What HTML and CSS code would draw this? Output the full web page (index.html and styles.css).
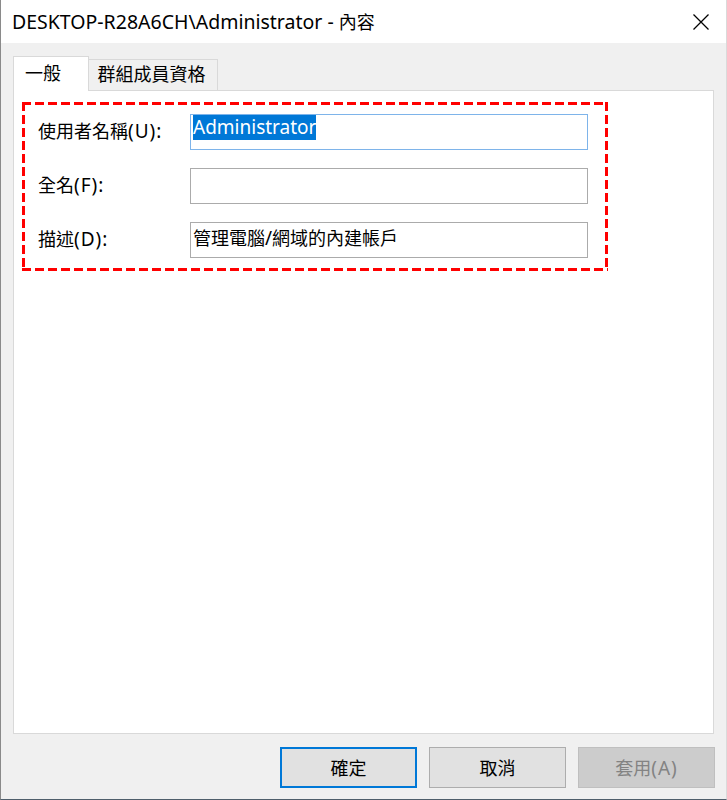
FILE: index.html
```html
<!DOCTYPE html>
<html lang="zh-Hant">
<head>
<meta charset="utf-8">
<title>DESKTOP-R28A6CH\Administrator - 內容</title>
<link rel="stylesheet" href="styles.css">
</head>
<body>
<div class="window">
  <div class="titlebar">
    <span class="title"><span class="en">DESKTOP-R28A6CH\Administrator - </span>內容</span>
    <span class="close">
      <svg width="16" height="16" viewBox="0 0 16 16"><path d="M0.5 0.5 L15.5 15.5 M15.5 0.5 L0.5 15.5" stroke="#000" stroke-width="1.3" fill="none"/></svg>
    </span>
  </div>
  <div class="body">
    <div class="tabs">
      <div class="tab active">一般</div>
      <div class="tab">群組成員資格</div>
    </div>
    <div class="panel">
      <div class="marked">
        <div class="label">使用者名稱<span class="en paren">(U):</span></div>
        <div class="field focus"><span class="sel en">Administrator</span></div>
        <div class="label">全名<span class="en paren">(F):</span></div>
        <div class="field"></div>
        <div class="label">描述<span class="en paren">(D):</span></div>
        <div class="field">管理電腦<span class="en">/</span>網域的內建帳戶</div>
      </div>
    </div>
    <div class="buttons">
      <div class="btn default">確定</div>
      <div class="btn">取消</div>
      <div class="btn disabled">套用<span class="en paren">(A)</span></div>
    </div>
  </div>
</div>
</body>
</html>
```

FILE: styles.css
```css
html, body {
  margin: 0;
  padding: 0;
}
body {
  font-family: "Noto Sans", "Noto Sans CJK TC", sans-serif;
  font-size: 18px;
  color: #000;
  background: #f0f0f0;
}
.en {
  font-size: 19px;
}
.title .en {
  font-size: 19.5px;
}
.paren {
  letter-spacing: 1px;
}
.window {
  width: 727px;
  height: 800px;
  box-sizing: border-box;
  background: #f0f0f0;
  border-left: 1px solid #8a8a8a;
  border-right: 1px solid #dadada;
  border-bottom: 1px solid #4f5e6b;
  display: flex;
  flex-direction: column;
}
.titlebar {
  height: 43px;
  background: #fff;
  display: flex;
  align-items: center;
  justify-content: space-between;
  padding-left: 11px;
  padding-right: 17px;
  flex: none;
}
.title {
  font-size: 18px;
  line-height: 24px;
  white-space: nowrap;
}
.close {
  display: flex;
  width: 16px;
  height: 16px;
}
.body {
  flex: 1;
  display: flex;
  flex-direction: column;
  padding: 13px 12px 0 12px;
}
.tabs {
  display: flex;
  align-items: flex-end;
  height: 34px;
  flex: none;
}
.tab {
  box-sizing: border-box;
  height: 31px;
  width: 129px;
  border: 1px solid #d9d9d9;
  border-bottom: none;
  border-left: none;
  background: #f0f0f0;
  display: flex;
  align-items: center;
  justify-content: center;
  line-height: 24px;
  padding-bottom: 2px;
  padding-right: 3px;
}
.tab.active {
  position: relative;
  z-index: 1;
  width: 76px;
  height: 35px;
  margin-bottom: -1px;
  border-left: 1px solid #d9d9d9;
  background: #fff;
  justify-content: flex-start;
  padding-left: 11px;
  padding-bottom: 3px;
}
.panel {
  box-sizing: border-box;
  height: 644px;
  background: #fff;
  border: 1px solid #d9d9d9;
  padding: 11px 0 0 8px;
  flex: none;
}
.marked {
  box-sizing: border-box;
  width: 586px;
  height: 169px;
  padding: 12px 20px 0 16px;
  display: grid;
  grid-template-columns: 152px 398px;
  grid-auto-rows: 36px;
  row-gap: 18px;
  align-items: center;
  background:
    repeating-linear-gradient(90deg, #f00 0 9px, transparent 9px 13px) left top / 100% 3px no-repeat,
    repeating-linear-gradient(90deg, #f00 0 9px, transparent 9px 13px) left bottom / 100% 3px no-repeat,
    repeating-linear-gradient(180deg, #f00 0 9px, transparent 9px 13px) left top / 3px 100% no-repeat,
    repeating-linear-gradient(180deg, #f00 0 9px, transparent 9px 13px) right top / 3px 100% no-repeat;
}
.label {
  line-height: 24px;
  white-space: nowrap;
  padding-bottom: 3px;
}
.field {
  box-sizing: border-box;
  height: 36px;
  border: 1px solid #ababab;
  padding: 0 2px;
  line-height: 30px;
  white-space: nowrap;
  align-self: start;
}
.field.focus {
  border-color: #7eb4ea;
}
.sel {
  display: inline-block;
  vertical-align: top;
  line-height: 25px;
  height: 25px;
  background: #0078d7;
  color: #fff;
}
.buttons {
  display: flex;
  justify-content: flex-end;
  gap: 12px;
  padding-top: 13px;
  margin-right: -1px;
}
.btn {
  box-sizing: border-box;
  width: 137px;
  height: 41px;
  border: 1px solid #adadad;
  background: #e1e1e1;
  display: flex;
  align-items: center;
  justify-content: center;
  line-height: 24px;
}
.btn.default {
  border: 2px solid #0078d7;
}
.btn.disabled {
  background: #cccccc;
  border-color: #bfbfbf;
  color: #838383;
}
```
